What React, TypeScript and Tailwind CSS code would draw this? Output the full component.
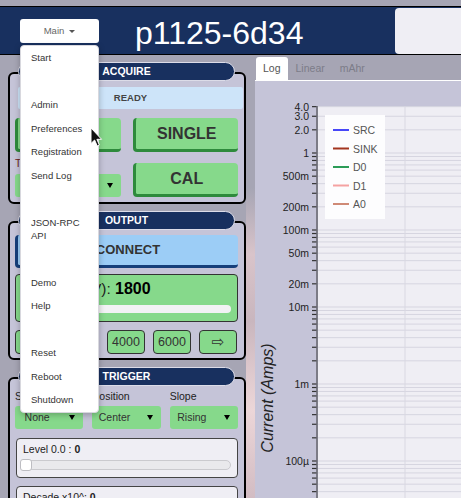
import type { ReactNode } from "react";

const menuItems: (string | string[] | null)[] = [
  "Start",
  null,
  "Admin",
  "Preferences",
  "Registration",
  "Send Log",
  null,
  ["JSON-RPC", "API"],
  null,
  "Demo",
  "Help",
  null,
  "Reset",
  "Reboot",
  "Shutdown",
];

const legend = [
  { name: "SRC", color: "#4848f8" },
  { name: "SINK", color: "#a3351f" },
  { name: "D0", color: "#2c9c58" },
  { name: "D1", color: "#f5a2a2" },
  { name: "A0", color: "#cf8a76" },
];

const tickLabels: Record<string, string> = {
  "4,0": "4.0",
  "3,0": "3.0",
  "2,0": "2.0",
  "1,0": "1",
  "5,-1": "500m",
  "2,-1": "200m",
  "1,-1": "100m",
  "5,-2": "50m",
  "2,-2": "20m",
  "1,-2": "10m",
  "1,-3": "1m",
  "1,-4": "100µ",
};

// local chart coords: y = 72 - 77 * log10(v)
const yOf = (k: number, n: number) => 72 - 77 * (Math.log10(k) + n);

const ticks: { key: string; y: number; label?: string }[] = [];
for (let n = 0; n >= -5; n--) {
  for (let k = 1; k <= 9; k++) {
    const y = yOf(k, n);
    if (y < 25 || y > 420) continue;
    ticks.push({ key: `${k},${n}`, y, label: tickLabels[`${k},${n}`] });
  }
}

function Panel({ title, className = "", children }: { title: string; className?: string; children: ReactNode }) {
  return (
    <div className={`mt-[17px] rounded-[6px] border-2 border-black bg-[#c5c4d8] pl-[5px] pr-[6px] ${className}`}>
      <div className="-mt-[12px] ml-[3px] mr-[3px] flex h-[19px] items-center justify-center rounded-full border border-[#dcdce8] bg-[#18305f] text-[10.5px] font-bold text-white">
        {title}
      </div>
      {children}
    </div>
  );
}

function BigButton({ children, className = "" }: { children: ReactNode; className?: string }) {
  return (
    <div
      className={`flex h-[34px] items-center justify-center rounded-[4px] border-b-[3px] border-l-[3px] border-[#2e8a3c] bg-[#86d98b] text-[16px] font-bold text-[#333] ${className}`}
    >
      {children}
    </div>
  );
}

function Select({ value }: { value: string }) {
  return (
    <div className="flex h-[23px] items-center rounded-[3px] bg-[#86d98b] pr-[8px] text-[10.5px] text-[#333]">
      <span className="flex-1 pr-[10px] text-center">{value}</span>
      <span className="h-0 w-0 border-x-[3px] border-t-[5px] border-x-transparent border-t-black" />
    </div>
  );
}

function SmallButton({ children }: { children: ReactNode }) {
  return (
    <div className="flex h-[24px] w-[38px] items-center justify-center rounded-[4px] border border-[#333] bg-[#86d98b] text-[12.5px] text-[#333]">
      {children}
    </div>
  );
}

function Chart() {
  return (
    <svg width="206" height="417" className="block" style={{ fontFamily: "'Liberation Sans', Arial, sans-serif" }}>
      <rect x="63" y="25.6" width="143" height="392" fill="#efeef4" />
      {ticks.map((t) => (
        <line key={`g${t.key}`} x1="63" x2="206" y1={t.y} y2={t.y} stroke="#d6d5e0" strokeWidth="1" />
      ))}
      <line x1="150" x2="150" y1="25.6" y2="417" stroke="#d9d8e2" strokeWidth="1" />
      {ticks.map((t) => (
        <line key={`t${t.key}`} x1="57" x2="62" y1={t.y} y2={t.y} stroke="#333" strokeWidth="1.2" />
      ))}
      <line x1="62" x2="62" y1="25" y2="417" stroke="#6a6a72" strokeWidth="1.6" />
      {ticks
        .filter((t) => t.label)
        .map((t) => (
          <text key={`l${t.key}`} x="54" y={t.y} textAnchor="end" dominantBaseline="central" fontSize="10.5" fill="#222">
            {t.label}
          </text>
        ))}
      <rect x="70" y="34" width="60" height="104" fill="#fdfdfe" />
      {legend.map((l, i) => {
        const y = 49 + i * 18.5;
        return (
          <g key={l.name}>
            <line x1="78" x2="94" y1={y} y2={y} stroke={l.color} strokeWidth="2" />
            <text x="98" y={y} dominantBaseline="central" fontSize="10.5" fill="#555">
              {l.name}
            </text>
          </g>
        );
      })}
      <text
        x="12.5"
        y="317"
        transform="rotate(-90 12.5 317)"
        textAnchor="middle"
        dominantBaseline="central"
        fontSize="16"
        fontStyle="italic"
        fill="#222"
      >
        Current (Amps)
      </text>
    </svg>
  );
}

export default function App() {
  return (
    <div className="relative h-[498px] w-[461px] overflow-hidden bg-[#a6a5b4] font-['Liberation_Sans',Arial,sans-serif]">
      {/* header */}
      <div className="mt-[6px] flex h-[49px] border-y border-black bg-[#18305f]">
        <div className="ml-[20px] mt-[12px] flex h-[24px] w-[79px] items-center justify-center gap-[5px] rounded-[3px] bg-white text-[9.5px] text-[#666]">
          <span>Main</span>
          <span className="h-0 w-0 border-x-[3px] border-t-[3px] border-x-transparent border-t-[#555]" />
        </div>
        <div className="ml-[36px] mt-[10px] text-[32px] leading-[32px] text-white">p1125-6d34</div>
        <div className="mt-[1px] ml-auto w-[66px] rounded-l-[4px] bg-[#efeef4]" />
      </div>

      {/* body */}
      <div className="flex h-[443px]">
        <div className="w-[246px] shrink-0 pl-[8px]">
          <Panel title="ACQUIRE" className="pb-[5px]">
            <div className="mt-[6px] ml-[3px] -mr-[5px] flex h-[22px] items-center justify-center rounded-[2px] bg-[#cde4f9] text-[9.5px] font-bold text-[#444]">
              READY
            </div>
            <div className="mt-[9px] grid grid-cols-2 gap-[12px]">
              <BigButton>RUN</BigButton>
              <BigButton>SINGLE</BigButton>
            </div>
            <div className="mt-[5px] grid grid-cols-2 items-end gap-[12px]">
              <div>
                <div className="text-[10.5px] leading-[12px] text-[#6b1b1b]">Trig Mode</div>
                <div className="mt-[5px]">
                  <Select value="Auto" />
                </div>
              </div>
              <BigButton>CAL</BigButton>
            </div>
          </Panel>

          <Panel title="OUTPUT" className="pb-[4px]">
            <div className="mt-[5px] flex h-[33px] items-center justify-center rounded-[4px] border-b-[3px] border-l-[3px] border-[#163f7a] bg-[#9ccdf6] text-[13px] font-bold text-[#333]">
              CONNECT
            </div>
            <div className="mt-[6px] h-[48px] rounded-[4px] border border-[#333] bg-[#86d98b] px-[6px] pt-[5px]">
              <div className="text-[16px] leading-[18px] text-[#222]">
                <span className="text-[15.5px]">Output (mV): </span>
                <b className="text-black">1800</b>
              </div>
              <div className="mt-[7px] h-[8px] rounded-full bg-[#f2f2f4]" />
            </div>
            <div className="mt-[8px] flex gap-[8px]">
              <SmallButton>
                <span className="font-['DejaVu_Sans',sans-serif] text-[15px]">⇦</span>
              </SmallButton>
              <SmallButton>2000</SmallButton>
              <SmallButton>4000</SmallButton>
              <SmallButton>6000</SmallButton>
              <SmallButton>
                <span className="font-['DejaVu_Sans',sans-serif] text-[15px]">⇨</span>
              </SmallButton>
            </div>
          </Panel>

          <Panel title="TRIGGER">
            <div className="mt-[4px] grid grid-cols-3 gap-[9px] text-[10.5px] leading-[12px] text-[#222]">
              <span>Source</span>
              <span>Position</span>
              <span>Slope</span>
            </div>
            <div className="mt-[4px] grid grid-cols-3 gap-[9px]">
              <Select value="None" />
              <Select value="Center" />
              <Select value="Rising" />
            </div>
            <div className="mt-[9px] ml-[1px] h-[40px] rounded-[4px] border border-[#444] bg-[#efeef4] pl-[6px] pt-[4px]">
              <div className="text-[10.5px] leading-[12px] text-[#222]">
                Level 0.0 : <b>0</b>
              </div>
              <div className="relative mt-[5px] mr-[6px] -ml-[3px] h-[10px] rounded-full border border-[#cacace] bg-[#e9e9ec]">
                <div className="absolute -left-[1px] -top-[2px] h-[12px] w-[12px] rounded-[3px] border border-[#bdbdc2] bg-white" />
              </div>
            </div>
            <div className="mt-[8px] ml-[1px] h-[40px] rounded-[4px] border border-[#444] bg-[#efeef4] pl-[6px] pt-[4px]">
              <div className="text-[10.5px] leading-[12px] text-[#222]">
                Decade x10^: <b>0</b>
              </div>
            </div>
          </Panel>
        </div>

        <div className="w-[9px] shrink-0 bg-[linear-gradient(180deg,#a6a5b4_0%,#a6a5b4_30%,#d9c4ca_45%,#c9b6be_60%,#ecd6d8_80%,#d2bcc3_100%)]" />

        <div className="flex min-w-0 flex-1 flex-col">
          <div className="flex h-[26px] items-end border-b border-white pl-[1px] text-[10.5px]">
            <div className="flex h-[23px] items-center rounded-t-[3px] bg-white px-[7px] text-[#555]">Log</div>
            <div className="flex h-[23px] items-center px-[8px] text-[#7c7c88]">Linear</div>
            <div className="flex h-[23px] items-center px-[7px] text-[#7c7c88]">mAhr</div>
          </div>
          <div className="flex-1 bg-[#c5c4d8]">
            <Chart />
          </div>
        </div>
      </div>

      {/* open dropdown menu */}
      <div className="absolute left-[20px] top-[45px] w-[79px] rounded-[4px] border border-[#d8d8de] bg-white text-[9.5px] leading-[13px] text-[#333] shadow-[0_2px_6px_rgba(0,0,0,0.25)]">
        {menuItems.map((item, i) =>
          item === null ? (
            <div key={i} className="h-[23.5px]" />
          ) : Array.isArray(item) ? (
            <div key={i} className="py-[5.25px] pl-[10px]">
              {item.map((line) => (
                <div key={line}>{line}</div>
              ))}
            </div>
          ) : (
            <div key={i} className="flex h-[23.5px] items-center pl-[10px]">
              {item}
            </div>
          ),
        )}
      </div>

      {/* mouse pointer */}
      <svg className="absolute left-[90px] top-[127px]" width="13" height="21" viewBox="0 0 13 21">
        <path
          d="M1 1 L1 16.5 L4.6 13 L7.2 19 L9.4 18 L6.9 12.3 L11.6 12.3 Z"
          fill="#111"
          stroke="#fff"
          strokeWidth="1"
          strokeLinejoin="round"
        />
      </svg>
    </div>
  );
}
